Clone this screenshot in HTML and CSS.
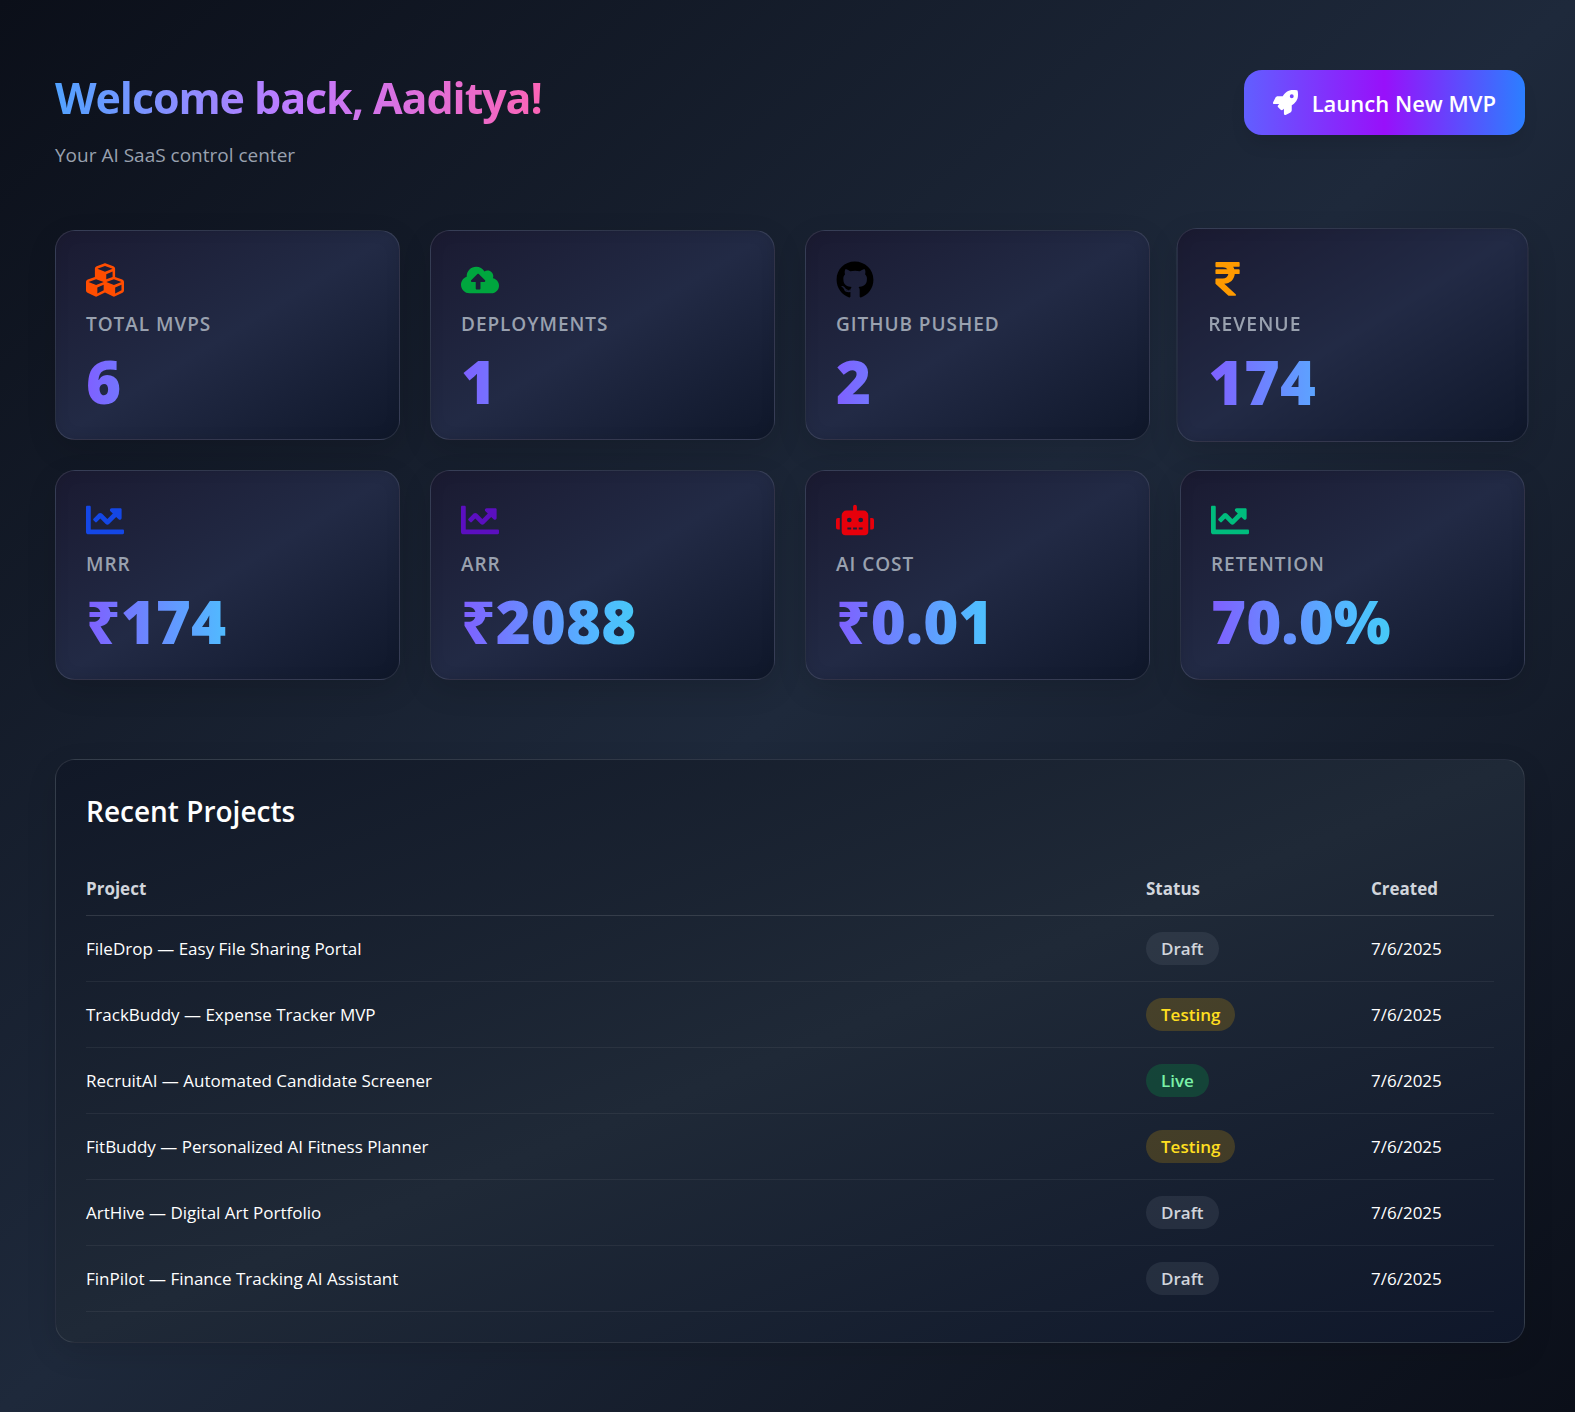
FILE: index.html
```html
<!DOCTYPE html>
<html lang="en">
<head>
    <meta charset="UTF-8">
    <meta name="viewport" content="width=device-width, initial-scale=1.0">
    <title>Dashboard</title>
    <link rel="stylesheet" href="styles.css">
</head>
<body>

<!-- Header -->
<header class="page-header">
    <div>
        <h1>Welcome back, Aaditya!</h1>
        <p class="subtitle">Your AI SaaS control center</p>
    </div>
    <button class="launch-button" type="button">
        <svg viewBox="0 0 512 512" aria-hidden="true"><path d="M505.12 19.09c-1.19-5.53-6.66-11-12.21-12.19C460.72 0 435.51 0 410.41 0 307.18 0 245.27 55.2 199.05 128H94.84c-16.35.02-35.56 11.88-42.89 26.48L2.52 253.3A28.4 28.4 0 0 0 0 264a24 24 0 0 0 24 24h103.82l-22.48 22.47c-11.36 11.36-12.99 32.26 0 45.25l50.91 50.9c11.15 11.19 32.15 13.16 45.27 0L224 384.16V488a24 24 0 0 0 24 24 28.56 28.56 0 0 0 10.71-2.52l98.73-49.39c14.63-7.29 26.5-26.5 26.5-42.85V312.8C456.54 266.48 512 204.39 512 101.7c.08-25.2.08-50.4-6.88-82.61zM384.04 168a40 40 0 1 1 40-40 40 40 0 0 1-40 40z"/></svg>
        Launch New MVP
    </button>
</header>

<main>
    <!-- Stats -->
    <section class="stats">
        <div class="card">
            <svg class="icon orange" viewBox="0 0 512 512" aria-hidden="true"><path d="M488.6 250.2L392 214V105.5c0-15-9.3-28.4-23.4-33.7l-100-37.5c-8.1-3.1-17.1-3.1-25.3 0l-100 37.5c-14.1 5.3-23.4 18.7-23.4 33.7V214l-96.6 36.2C9.3 255.5 0 268.9 0 283.9V394c0 13.6 7.7 26.1 19.9 32.2l100 50c10.1 5.1 22.1 5.1 32.2 0l103.9-52 103.9 52c10.1 5.1 22.1 5.1 32.2 0l100-50c12.2-6.1 19.9-18.6 19.9-32.2V283.9c0-15-9.3-28.4-23.4-33.7zM358 214.8l-85 31.9v-68.2l85-37v73.3zM154 104.1l102-38.2 102 38.2v.6l-102 41.4-102-41.4v-.6zm84 291.1l-85 42.5v-79.1l85-38.8v75.4zm0-112l-102 41.4-102-41.4v-.6l102-38.2 102 38.2v.6zm240 112l-85 42.5v-79.1l85-38.8v75.4zm0-112l-102 41.4-102-41.4v-.6l102-38.2 102 38.2v.6z"/></svg>
            <h2>Total MVPs</h2>
            <p class="value">6</p>
        </div>
        <div class="card">
            <svg class="icon green" viewBox="0 0 640 512" aria-hidden="true"><path d="M537.6 226.6c4.1-10.7 6.4-22.4 6.4-34.6 0-53-43-96-96-96-19.7 0-38.1 6-53.3 16.2C367 64.2 315.3 32 256 32c-88.4 0-160 71.6-160 160 0 2.7.1 5.4.2 8.1C40.2 219.8 0 273.2 0 336c0 79.5 64.5 144 144 144h368c70.7 0 128-57.3 128-128 0-61.9-44-113.6-102.4-125.4zM393.4 288H328v112c0 8.8-7.2 16-16 16h-48c-8.8 0-16-7.2-16-16V288h-65.4c-14.3 0-21.4-17.2-11.3-27.4l105.4-105.4c6.2-6.2 16.4-6.2 22.6 0l105.4 105.4c10.1 10.2 2.9 27.4-11.3 27.4z"/></svg>
            <h2>Deployments</h2>
            <p class="value">1</p>
        </div>
        <div class="card">
            <svg class="icon black" viewBox="0 0 496 512" aria-hidden="true"><path d="M165.9 397.4c0 2-2.3 3.6-5.2 3.6-3.3.3-5.6-1.3-5.6-3.6 0-2 2.3-3.6 5.2-3.6 3-.3 5.6 1.3 5.6 3.6zm-31.1-4.5c-.7 2 1.3 4.3 4.3 4.9 2.6 1 5.6 0 6.2-2s-1.3-4.3-4.3-5.2c-2.6-.7-5.5.3-6.2 2.3zm44.2-1.7c-2.9.7-4.9 2.6-4.6 4.9.3 2 2.9 3.3 5.9 2.6 2.9-.7 4.9-2.6 4.6-4.6-.3-1.9-3-3.2-5.9-2.9zM244.8 8C106.1 8 0 113.3 0 252c0 110.9 69.8 205.8 169.5 239.2 12.8 2.3 17.3-5.6 17.3-12.1 0-6.2-.3-40.4-.3-61.4 0 0-70 15-84.7-29.8 0 0-11.4-29.1-27.8-36.6 0 0-22.9-15.7 1.6-15.4 0 0 24.9 2 38.6 25.8 21.9 38.6 58.6 27.5 72.9 20.9 2.3-16 8.8-27.1 16-33.7-55.9-6.2-112.3-14.3-112.3-110.5 0-27.5 7.6-41.3 23.6-58.9-2.6-6.5-11.1-33.3 2.6-67.9 20.9-6.5 69 27 69 27 20-5.6 41.5-8.5 62.8-8.5s42.8 2.9 62.8 8.5c0 0 48.1-33.6 69-27 13.7 34.7 5.2 61.4 2.6 67.9 16 17.7 25.8 31.5 25.8 58.9 0 96.5-58.9 104.2-114.8 110.5 9.2 7.9 17 22.9 17 46.4 0 33.7-.3 75.4-.3 83.6 0 6.5 4.6 14.4 17.3 12.1C428.2 457.8 496 362.9 496 252 496 113.3 383.5 8 244.8 8z"/></svg>
            <h2>GitHub Pushed</h2>
            <p class="value">2</p>
        </div>
        <div class="card active">
            <svg class="icon amber" viewBox="0 0 320 512" aria-hidden="true"><path d="M308 96c6.627 0 12-5.373 12-12V44c0-6.627-5.373-12-12-12H12C5.373 32 0 37.373 0 44v44.748c0 6.627 5.373 12 12 12h85.28c27.308 0 48.261 9.958 60.97 27.252H12c-6.627 0-12 5.373-12 12v40c0 6.627 5.373 12 12 12h158.757c-6.217 36.086-32.961 58.632-74.757 58.632H12c-6.627 0-12 5.373-12 12v53.012c0 3.349 1.4 6.546 3.861 8.818l165.052 152.356a12.001 12.001 0 0 0 8.139 3.182h82.562c10.924 0 16.166-13.408 8.139-20.818L116.871 319.906c76.499-2.34 131.144-53.395 138.318-127.906H308c6.627 0 12-5.373 12-12v-40c0-6.627-5.373-12-12-12h-58.69c-3.486-11.541-8.28-22.246-14.252-32H308z"/></svg>
            <h2>Revenue</h2>
            <p class="value">174</p>
        </div>
        <div class="card">
            <svg class="icon blue" viewBox="0 0 512 512" aria-hidden="true"><path d="M496 384H64V80c0-8.84-7.16-16-16-16H16C7.16 64 0 71.16 0 80v336c0 17.67 14.33 32 32 32h464c8.84 0 16-7.16 16-16v-32c0-8.84-7.16-16-16-16zM464 96H345.94c-21.38 0-32.09 25.85-16.97 40.97l32.4 32.4L288 242.75l-73.37-73.37c-12.5-12.5-32.76-12.5-45.25 0l-68.69 68.69c-6.25 6.25-6.25 16.38 0 22.63l22.62 22.62c6.25 6.25 16.38 6.25 22.63 0L192 237.25l73.37 73.37c12.5 12.5 32.76 12.5 45.25 0l96-96 32.4 32.4c15.12 15.12 40.97 4.41 40.97-16.97V112c.01-8.84-7.15-16-15.99-16z"/></svg>
            <h2>MRR</h2>
            <p class="value">₹174</p>
        </div>
        <div class="card">
            <svg class="icon purple" viewBox="0 0 512 512" aria-hidden="true"><path d="M496 384H64V80c0-8.84-7.16-16-16-16H16C7.16 64 0 71.16 0 80v336c0 17.67 14.33 32 32 32h464c8.84 0 16-7.16 16-16v-32c0-8.84-7.16-16-16-16zM464 96H345.94c-21.38 0-32.09 25.85-16.97 40.97l32.4 32.4L288 242.75l-73.37-73.37c-12.5-12.5-32.76-12.5-45.25 0l-68.69 68.69c-6.25 6.25-6.25 16.38 0 22.63l22.62 22.62c6.25 6.25 16.38 6.25 22.63 0L192 237.25l73.37 73.37c12.5 12.5 32.76 12.5 45.25 0l96-96 32.4 32.4c15.12 15.12 40.97 4.41 40.97-16.97V112c.01-8.84-7.15-16-15.99-16z"/></svg>
            <h2>ARR</h2>
            <p class="value">₹2088</p>
        </div>
        <div class="card">
            <svg class="icon red" viewBox="0 0 640 512" aria-hidden="true"><path d="M32 224h32v192H32a32 32 0 0 1-32-32V256a32 32 0 0 1 32-32zm512-48v272a64 64 0 0 1-64 64H160a64 64 0 0 1-64-64V176a80 80 0 0 1 80-80h112V32a32 32 0 0 1 64 0v64h112a80 80 0 0 1 80 80zm-280 80a40 40 0 1 0-40 40 40 40 0 0 0 40-40zm-8 128h-64v32h64zm96 0h-64v32h64zm104-128a40 40 0 1 0-40 40 40 40 0 0 0 40-40zm-8 128h-64v32h64zm192-128v128a32 32 0 0 1-32 32h-32V224h32a32 32 0 0 1 32 32z"/></svg>
            <h2>AI Cost</h2>
            <p class="value">₹0.01</p>
        </div>
        <div class="card">
            <svg class="icon teal" viewBox="0 0 512 512" aria-hidden="true"><path d="M496 384H64V80c0-8.84-7.16-16-16-16H16C7.16 64 0 71.16 0 80v336c0 17.67 14.33 32 32 32h464c8.84 0 16-7.16 16-16v-32c0-8.84-7.16-16-16-16zM464 96H345.94c-21.38 0-32.09 25.85-16.97 40.97l32.4 32.4L288 242.75l-73.37-73.37c-12.5-12.5-32.76-12.5-45.25 0l-68.69 68.69c-6.25 6.25-6.25 16.38 0 22.63l22.62 22.62c6.25 6.25 16.38 6.25 22.63 0L192 237.25l73.37 73.37c12.5 12.5 32.76 12.5 45.25 0l96-96 32.4 32.4c15.12 15.12 40.97 4.41 40.97-16.97V112c.01-8.84-7.15-16-15.99-16z"/></svg>
            <h2>Retention</h2>
            <p class="value">70.0%</p>
        </div>
    </section>

    <!-- Recent Projects -->
    <section class="projects">
        <h2>Recent Projects</h2>
        <table>
            <thead>
                <tr>
                    <th>Project</th>
                    <th class="col-status">Status</th>
                    <th class="col-created">Created</th>
                </tr>
            </thead>
            <tbody>
                <tr>
                    <td>FileDrop — Easy File Sharing Portal</td>
                    <td><span class="badge draft">Draft</span></td>
                    <td>7/6/2025</td>
                </tr>
                <tr>
                    <td>TrackBuddy — Expense Tracker MVP</td>
                    <td><span class="badge testing">Testing</span></td>
                    <td>7/6/2025</td>
                </tr>
                <tr>
                    <td>RecruitAI — Automated Candidate Screener</td>
                    <td><span class="badge live">Live</span></td>
                    <td>7/6/2025</td>
                </tr>
                <tr>
                    <td>FitBuddy — Personalized AI Fitness Planner</td>
                    <td><span class="badge testing">Testing</span></td>
                    <td>7/6/2025</td>
                </tr>
                <tr>
                    <td>ArtHive — Digital Art Portfolio</td>
                    <td><span class="badge draft">Draft</span></td>
                    <td>7/6/2025</td>
                </tr>
                <tr>
                    <td>FinPilot — Finance Tracking AI Assistant</td>
                    <td><span class="badge draft">Draft</span></td>
                    <td>7/6/2025</td>
                </tr>
            </tbody>
        </table>
    </section>
</main>

</body>
</html>
```
FILE: styles.css
```css
* {
    box-sizing: border-box;
}

body {
    margin: 0;
    padding: 70px 50px 68px 55px;
    min-height: 100vh;
    background: linear-gradient(to bottom right, #0b0f19, #1e293b, #0b0f19);
    color: white;
    font-family: "Segoe UI", "Open Sans", "Noto Sans", sans-serif;
    font-size: 17px;
}

h1, h2, p {
    margin: 0;
}

/* Header */
.page-header {
    display: flex;
    justify-content: space-between;
    align-items: flex-start;
    margin-bottom: 60px;
}

h1 {
    font-size: 43px;
    line-height: 55px;
    font-weight: 700;
    letter-spacing: -0.025em;
    background: linear-gradient(to right, #51a2ff, #c27aff, #fb64b6);
    -webkit-background-clip: text;
    background-clip: text;
    color: transparent;
}

.subtitle {
    margin-top: 15px;
    font-size: 19px;
    line-height: 30px;
    color: #99a1af;
}

.launch-button {
    display: flex;
    align-items: center;
    gap: 14px;
    height: 65px;
    padding: 0 29px;
    border: none;
    border-radius: 18px;
    background: linear-gradient(to right, #615fff, #9810fa, #2b7fff);
    box-shadow: 0 12px 18px -4px rgba(0, 0, 0, 0.1);
    color: white;
    font-family: inherit;
    font-size: 22px;
    font-weight: 600;
    cursor: pointer;
}

.launch-button svg {
    width: 25px;
    height: 25px;
    fill: currentColor;
}

/* Stat cards */
.stats {
    display: grid;
    grid-template-columns: repeat(4, 1fr);
    gap: 30px;
    margin-bottom: 79px;
}

.card {
    padding: 30px;
    border: 1px solid rgba(255, 255, 255, 0.1);
    border-radius: 20px;
    background: linear-gradient(to bottom right, #1a1a31, #222a45, #0f172a);
    box-shadow: 0 10px 30px rgba(0, 0, 0, 0.12), inset 0 0 15px rgba(0, 0, 0, 0.08);
}

.card.active {
    transform: scale(1.02);
}

.icon {
    display: block;
    width: 38px;
    height: 38px;
    margin-bottom: 10px;
    fill: currentColor;
}

.orange { color: #ff4d00; }
.green { color: #00a63e; }
.black { color: #000; }
.amber { color: #fe9a00; }
.blue { color: #1447e6; }
.purple { color: #5b0fbf; }
.red { color: #e7000b; }
.teal { color: #00bc7d; }

.card h2 {
    font-size: 19px;
    line-height: 30px;
    font-weight: 600;
    letter-spacing: 0.05em;
    text-transform: uppercase;
    color: #99a1af;
}

.value {
    margin-top: 15px;
    font-size: 60px;
    line-height: 55px;
    font-weight: 800;
    background: linear-gradient(to right, #7f5fff, #50bcff, #2cecdd);
    -webkit-background-clip: text;
    background-clip: text;
    color: transparent;
}

/* Projects table */
.projects {
    padding: 30px;
    border: 1px solid rgba(255, 255, 255, 0.1);
    border-radius: 20px;
    background: linear-gradient(to bottom right, #111827, #1f2937, #0f172a);
    box-shadow: 0 10px 30px rgba(0, 0, 0, 0.12);
}

.projects h2 {
    margin-bottom: 30px;
    font-size: 28px;
    line-height: 42px;
    font-weight: 600;
}

table {
    width: 100%;
    table-layout: fixed;
    border-collapse: collapse;
    line-height: 25px;
}

th {
    padding: 14px 0;
    text-align: left;
    font-weight: 700;
    color: #d1d5dc;
    border-bottom: 1px solid rgba(255, 255, 255, 0.12);
}

td {
    padding: 16px 0;
    border-bottom: 1px solid rgba(255, 255, 255, 0.06);
}

.col-status {
    width: 225px;
}

.col-created {
    width: 123px;
}

.badge {
    display: inline-block;
    padding: 4px 15px;
    border-radius: 17px;
    font-weight: 600;
}

.draft {
    background-color: rgba(106, 114, 130, 0.2);
    color: #d1d5dc;
}

.testing {
    background-color: rgba(240, 177, 0, 0.2);
    color: #ffdf20;
}

.live {
    background-color: rgba(0, 201, 80, 0.2);
    color: #7bf1a8;
}

/* Small screens */
@media (max-width: 1000px) {
    .stats {
        grid-template-columns: repeat(2, 1fr);
    }
}
```
